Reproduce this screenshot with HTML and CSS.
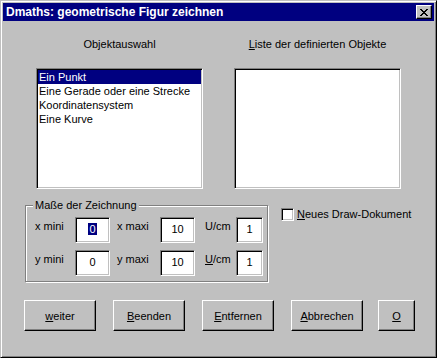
FILE: index.html
```html
<!DOCTYPE html>
<html lang="de">
<head>
  <meta charset="UTF-8">
  <title>Dmaths: geometrische Figur zeichnen</title>
  <link rel="stylesheet" href="styles.css">
</head>
<body>
  <div class="window">
    <div class="titlebar">
      <span class="title">Dmaths: geometrische Figur zeichnen</span>
      <span class="close">
        <svg width="8" height="7" viewBox="0 0 8 7" shape-rendering="crispEdges">
          <path d="M0 0h2v1H0z M6 0h2v1H6z M1 1h2v1H1z M5 1h2v1H5z M2 2h4v1H2z M3 3h2v1H3z M2 4h4v1H2z M1 5h2v1H1z M5 5h2v1H5z M0 6h2v1H0z M6 6h2v1H6z" fill="#000"/>
        </svg>
      </span>
    </div>

    <div class="cols">
      <div class="col">
        <div class="caption">Objektauswahl</div>
        <div class="listbox">
          <div class="item selected">Ein Punkt</div>
          <div class="item">Eine Gerade oder eine Strecke</div>
          <div class="item">Koordinatensystem</div>
          <div class="item">Eine Kurve</div>
        </div>
      </div>
      <div class="col">
        <div class="caption"><u>L</u>iste der definierten Objekte</div>
        <div class="listbox"></div>
      </div>
    </div>

    <div class="middle">
      <fieldset class="group">
        <legend>Maße der Zeichnung</legend>
        <div class="grid">
          <span class="lbl">x mini</span>
          <span class="field"><span class="sel">0</span></span>
          <span class="lbl lbl-mid">x maxi</span>
          <span class="field">10</span>
          <span class="lbl lbl-unit">U/cm</span>
          <span class="field">1</span>

          <span class="lbl">y mini</span>
          <span class="field">0</span>
          <span class="lbl lbl-mid">y maxi</span>
          <span class="field">10</span>
          <span class="lbl lbl-unit"><u>U</u>/cm</span>
          <span class="field">1</span>
        </div>
      </fieldset>
      <label class="check">
        <span class="box"></span>
        <span><u>N</u>eues Draw-Dokument</span>
      </label>
    </div>

    <div class="buttons">
      <button class="btn"><u>w</u>eiter</button>
      <button class="btn"><u>B</u>eenden</button>
      <button class="btn"><u>E</u>ntfernen</button>
      <button class="btn"><u>A</u>bbrechen</button>
      <button class="btn btn-small"><u>O</u></button>
    </div>
  </div>
</body>
</html>
```

FILE: styles.css
```css
body {
  margin: 0;
  font-family: "Liberation Sans", Arial, sans-serif;
  font-size: 11px;
  color: #000;
  background: #c0c0c0;
}
.window {
  width: 437px;
  height: 358px;
  box-sizing: border-box;
  padding: 2px;
  background: #c0c0c0;
  border: 1px solid;
  border-color: #c0c0c0 #000 #000 #c0c0c0;
  box-shadow: inset 1px 1px #fff, inset -1px -1px #808080;
}
.titlebar {
  height: 18px;
  display: flex;
  align-items: center;
  justify-content: space-between;
  padding: 0 2px 0 3px;
  background: #000080;
}
.title {
  color: #fff;
  font-weight: bold;
  font-size: 12px;
}
.close {
  width: 16px;
  height: 14px;
  box-sizing: border-box;
  display: flex;
  align-items: center;
  justify-content: center;
  padding-right: 1px;
  background: #c0c0c0;
  border: 1px solid;
  border-color: #fff #000 #000 #fff;
  box-shadow: inset -1px -1px #808080;
}
.cols {
  display: flex;
  gap: 31px;
  margin-left: 33px;
}
.col {
  width: 167px;
}
.caption {
  margin-top: 16px;
  line-height: 14px;
  text-align: center;
}
.listbox {
  margin-top: 17px;
  height: 121px;
  box-sizing: border-box;
  padding: 1px;
  background: #fff;
  border: 1px solid;
  border-color: #808080 #fff #fff #808080;
  box-shadow: inset 1px 1px #000, inset -1px -1px #c0c0c0;
}
.item {
  line-height: 14px;
  padding-left: 1px;
  white-space: nowrap;
}
.item.selected {
  background: #000080;
  color: #fff;
}
.middle {
  display: flex;
  align-items: flex-start;
  margin-top: 9px;
}
.group {
  margin: 0 0 0 22px;
  width: 243px;
  box-sizing: border-box;
  min-width: 0;
  padding: 5px 4px 5px 9px;
  border: 1px solid #808080;
  box-shadow: inset 1px 1px #fff, 1px 1px #fff;
}
.group legend {
  margin-left: -2px;
  padding: 0 2px;
  line-height: 14px;
  background: #c0c0c0;
}
.grid {
  display: grid;
  grid-template-columns: 40px 35px 50px 35px 41px 27px;
  grid-auto-rows: 26px;
  row-gap: 7px;
}
.lbl {
  padding-top: 2px;
  line-height: 14px;
  white-space: nowrap;
}
.lbl-mid {
  padding-left: 7px;
}
.lbl-unit {
  padding-left: 10px;
}
.field {
  display: block;
  box-sizing: border-box;
  line-height: 22px;
  text-align: center;
  background: #fff;
  border: 1px solid;
  border-color: #808080 #fff #fff #808080;
  box-shadow: inset 1px 1px #000, inset -1px -1px #c0c0c0;
}
.sel {
  display: inline-block;
  line-height: 12px;
  padding: 0 1px;
  background: #000080;
  color: #fff;
}
.check {
  display: flex;
  align-items: center;
  gap: 3px;
  margin: 9px 0 0 13px;
  line-height: 14px;
}
.box {
  width: 13px;
  height: 13px;
  box-sizing: border-box;
  background: #fff;
  border: 1px solid;
  border-color: #808080 #fff #fff #808080;
  box-shadow: inset 1px 1px #000, inset -1px -1px #c0c0c0;
}
.buttons {
  display: flex;
  gap: 17px;
  margin-top: 18px;
  padding-left: 21px;
}
.btn {
  width: 72px;
  height: 31px;
  box-sizing: border-box;
  padding: 0;
  font: inherit;
  color: #000;
  background: #c0c0c0;
  border: 1px solid;
  border-color: #fff #000 #000 #fff;
  box-shadow: inset -1px -1px #808080;
}
.btn-small {
  width: 37px;
  margin-left: -2px;
}
```
